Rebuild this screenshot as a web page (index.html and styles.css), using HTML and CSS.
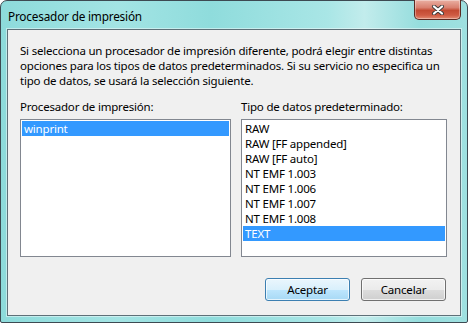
FILE: index.html
```html
<!DOCTYPE html>
<html lang="es">
<head>
	<meta charset="UTF-8">
	<title>Procesador de impresión</title>
	<link rel="stylesheet" href="styles.css">
</head>
<body>
	<div class="window">
		<div class="titlebar">
			<span class="title">Procesador de impresión</span>
			<span class="close">
				<svg width="16" height="10" viewBox="0 0 16 10"><path d="M4 1.5 L12 8.5 M12 1.5 L4 8.5" stroke="#3b3b3b" stroke-width="4" stroke-linecap="round"/><path d="M4 1.5 L12 8.5 M12 1.5 L4 8.5" stroke="#fff" stroke-width="2.2" stroke-linecap="round"/></svg>
			</span>
		</div>
		<div class="client">
			<p class="intro">Si selecciona un procesador de impresión diferente, podrá elegir entre distintas opciones para los tipos de datos predeterminados. Si su servicio no especifica un tipo de datos, se usará la selección siguiente.</p>
			<div class="lists">
				<div class="field">
					<label>Procesador de impresión:</label>
					<ul class="listbox">
						<li class="sel">winprint</li>
					</ul>
				</div>
				<div class="field">
					<label>Tipo de datos predeterminado:</label>
					<ul class="listbox">
						<li>RAW</li>
						<li>RAW [FF appended]</li>
						<li>RAW [FF auto]</li>
						<li>NT EMF 1.003</li>
						<li>NT EMF 1.006</li>
						<li>NT EMF 1.007</li>
						<li>NT EMF 1.008</li>
						<li class="sel">TEXT</li>
					</ul>
				</div>
			</div>
			<div class="buttons">
				<button class="btn default">Aceptar</button>
				<button class="btn">Cancelar</button>
			</div>
		</div>
	</div>
</body>
</html>
```

FILE: styles.css
```css
body,p,ul,li{padding: 0;margin: 0;}
li{list-style: none;}
body{font-family: "Noto Sans","Open Sans",sans-serif;font-size: 11.5px;letter-spacing: -0.2px;color: #000;}

.window{box-sizing: border-box;width: 468px;height: 323px;display: flex;flex-direction: column;padding: 0 6px 6px 6px;border: 1px solid #3d4a52;border-radius: 7px 7px 2px 2px;background: linear-gradient(90deg,#8ddbdb,#a3e4e4 25%,#8fdcdc 45%,#a9e6e6 70%,#c2ecec 78%,#95dddd 90%,#9fe0e0);}
.titlebar{height: 28px;display: flex;justify-content: space-between;align-items: flex-start;}
.title{padding: 7px 0 0 1px;font-size: 11.8px;line-height: 16px;}
.close{margin-top: -1px;box-sizing: border-box;width: 47px;height: 20px;display: flex;align-items: center;justify-content: center;border: 1px solid #5a2a22;border-top: none;border-radius: 0 0 5px 5px;background: linear-gradient(#eab0a3,#d9806f 40%,#c34a32 55%,#cf5b43 80%,#e38b72);box-shadow: inset 0 0 0 1px rgba(255,255,255,0.35);}

.client{flex: 1;box-sizing: border-box;display: flex;flex-direction: column;padding: 13px 13px 14px 12px;background: #f0f0f0;border: 1px solid #5e7078;box-shadow: 0 0 0 1px rgba(255,255,255,0.45);}
.intro{line-height: 15px;margin-right: -6px;}
.lists{margin-top: 11px;display: grid;grid-template-columns: 211px 206px;gap: 10px;}
.field label{display: block;line-height: 15px;margin-bottom: 5px;}
.listbox{box-sizing: border-box;height: 138px;padding: 1px;background: #fff;border: 1px solid #828790;}
.listbox li{height: 15px;line-height: 15px;padding-left: 2px;white-space: nowrap;}
.listbox .sel{background: #3399ff;color: #fff;}

.buttons{margin-top: auto;display: flex;justify-content: flex-end;gap: 11px;padding-right: 1px;}
.btn{box-sizing: border-box;width: 85px;height: 23px;font: inherit;letter-spacing: inherit;color: #000;border: 1px solid #707070;border-radius: 3px;background: linear-gradient(#f2f2f2,#ebebeb 50%,#dddddd 51%,#cfcfcf);box-shadow: inset 0 0 0 1px rgba(255,255,255,0.7);}
.btn.default{border-color: #3c7fb1;background: linear-gradient(#eaf6fd,#d9f0fc 50%,#bee6fd 51%,#a7d9f5);}
```
